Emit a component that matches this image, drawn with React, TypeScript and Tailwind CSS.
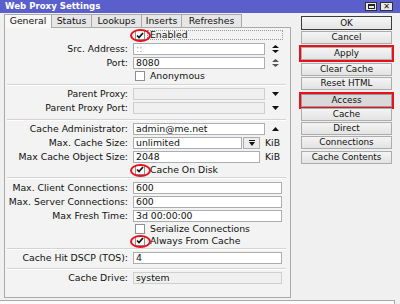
import React from "react";

function Check() {
  return (
    <svg width="8" height="7" viewBox="0 0 8 7" className="block">
      <polyline points="1,3.5 3,5.5 7,1" fill="none" stroke="#111" strokeWidth="1.7" />
    </svg>
  );
}

function CheckBox({ checked, circled }: { checked?: boolean; circled?: boolean }) {
  return (
    <div className="relative w-[10px] h-[10px] border border-[#8e8f8f] bg-white flex items-center justify-center">
      {checked && <Check />}
      {circled && (
        <div className="absolute left-[-6px] top-[-2px] w-[21px] h-[13px] rounded-[50%] border-[2.5px] border-[#e8101a]" />
      )}
    </div>
  );
}

function Label({ text }: { text: string }) {
  return <div className="w-[123px] text-right leading-none whitespace-nowrap">{text}</div>;
}

function SpinArrows({ gray }: { gray?: boolean }) {
  const c = gray ? "#555" : "#111";
  return (
    <svg width="7" height="8" viewBox="0 0 7 8" className="ml-[7px] block">
      <polygon points="0,3 7,3 3.5,0" fill={c} />
      <polygon points="0,5 7,5 3.5,8" fill={c} />
    </svg>
  );
}

function DownArrow() {
  return (
    <svg width="7" height="4" viewBox="0 0 7 4" className="ml-[7px] block">
      <polygon points="0,0 7,0 3.5,4" fill="#111" />
    </svg>
  );
}

function UpArrow() {
  return (
    <svg width="7" height="4" viewBox="0 0 7 4" className="ml-[7px] block">
      <polygon points="0,4 7,4 3.5,0" fill="#111" />
    </svg>
  );
}

function Sep({ cls }: { cls: string }) {
  return <div className={"ml-[2px] w-[279px] h-[2px] border-t border-[#d4d4d4] border-b border-b-white " + cls} />;
}

function Btn({ text, cls, red, def, pressed }: { text: string; cls: string; red?: boolean; def?: boolean; pressed?: boolean }) {
  return (
    <div className={"relative w-[91px] " + cls}>
      <div
        className={
          "w-full flex items-center justify-center leading-none " +
          (def
            ? "h-[14px] border border-[#3a3a3a] bg-[linear-gradient(#f6f6f6,#e4e4e4)]"
            : pressed
            ? "h-[13px] border border-[#9a9a9a] bg-[#d9d9d9]"
            : "h-[13px] border border-[#acacac] bg-[linear-gradient(#f4f4f4,#e3e3e3)]")
        }
      >
        {text}
      </div>
      {red && <div className="absolute left-[-2px] right-[-2px] top-[-2px] bottom-[-2px] border-2 border-[#e8101a]" />}
    </div>
  );
}

export default function App() {
  const input = "ml-[5px] h-[12px] border border-[#abadb3] bg-white flex items-center pl-[2px] leading-none";
  const disabled = "ml-[5px] h-[12px] border border-[#cfcfcf] bg-[#f0f0f0] flex items-center pl-[2px] leading-none";
  const row = "flex items-center h-[12px]";
  return (
    <div className="w-[400px] h-[304px] bg-[#f0f0f0] font-['DejaVu_Sans',sans-serif] text-[9.3px] text-[#111] overflow-hidden">
      {/* Title bar */}
      <div className="h-[13px] bg-[#5b5fcc] flex items-center">
        <div className="pl-[5px] text-white font-bold text-[8.6px] leading-none">Web Proxy Settings</div>
        <div className="ml-auto flex items-center mr-[7px]">
          <div className="w-[12px] h-[9px] border border-[#303030] bg-[#e8e8e8] flex items-center justify-center">
            <div className="w-[7px] h-[5px] border border-[#222] border-t-2" />
          </div>
          <div className="ml-[3px] w-[13px] h-[9px] border border-[#303030] bg-[#e8e8e8] flex items-center justify-center text-[8px] font-bold leading-none">
            ✕
          </div>
        </div>
      </div>

      <div className="flex">
        {/* Left column */}
        <div className="ml-[4px] w-[287px]">
          {/* Tabs */}
          <div className="flex h-[14px] items-end">
            <div className="w-[48px] h-[14px] border border-b-0 border-[#a9a9a9] bg-[#f8f8f8] flex items-center justify-center leading-none relative z-10 -mb-[1px] pb-[1px]">General</div>
            <div className="w-[40px] h-[13px] border border-l-0 border-b-0 border-[#a9a9a9] bg-[#e6e6e6] flex items-center justify-center leading-none">Status</div>
            <div className="w-[50px] h-[13px] border border-l-0 border-b-0 border-[#a9a9a9] bg-[#e6e6e6] flex items-center justify-center leading-none">Lookups</div>
            <div className="w-[40px] h-[13px] border border-l-0 border-b-0 border-[#a9a9a9] bg-[#e6e6e6] flex items-center justify-center leading-none">Inserts</div>
            <div className="w-[60px] h-[13px] border border-l-0 border-b-0 border-[#a9a9a9] bg-[#e6e6e6] flex items-center justify-center leading-none">Refreshes</div>
          </div>
          {/* Panel */}
          <div className="h-[271px] border border-[#a9a9a9] bg-[#f3f3f3] flex flex-col">
            {/* Enabled */}
            <div className="flex items-center h-[12px] mt-[1px] ml-[130px]">
              <CheckBox checked circled />
              <div className="ml-[2px] w-[136px] h-[10px] border border-dotted border-[#9a9a9a] flex items-center pl-[2px] leading-none">Enabled</div>
            </div>
            <div className={row + " mt-[2px]"}>
              <Label text="Src. Address:" />
              <div className={input + " w-[132px] text-[#999]"}>::</div>
              <SpinArrows />
            </div>
            <div className={row + " mt-[2px]"}>
              <Label text="Port:" />
              <div className={input + " w-[132px]"}>8080</div>
              <SpinArrows gray />
            </div>
            <div className="flex items-center h-[11px] mt-[1px] ml-[130px]">
              <CheckBox />
              <div className="ml-[5px] leading-none">Anonymous</div>
            </div>
            <Sep cls="mt-[3px]" />
            <div className={row + " mt-[2px]"}>
              <Label text="Parent Proxy:" />
              <div className={disabled + " w-[132px]"}></div>
              <DownArrow />
            </div>
            <div className={row + " mt-[2px]"}>
              <Label text="Parent Proxy Port:" />
              <div className={disabled + " w-[132px]"}></div>
              <DownArrow />
            </div>
            <Sep cls="mt-[5px]" />
            <div className={row + " mt-[2px]"}>
              <Label text="Cache Administrator:" />
              <div className={input + " w-[132px]"}>admin@me.net</div>
              <UpArrow />
            </div>
            <div className={row + " mt-[2px]"}>
              <Label text="Max. Cache Size:" />
              <div className={input + " w-[109px]"}>unlimited</div>
              <div className="ml-[1px] w-[17px] h-[12px] border border-[#acacac] bg-[#ececec] flex flex-col items-center justify-center">
                <div className="w-[6px] h-[1px] bg-[#111]" />
                <svg width="6" height="4" viewBox="0 0 6 4" className="block mt-[1px]">
                  <polygon points="0,0 6,0 3,4" fill="#111" />
                </svg>
              </div>
              <div className="ml-[5px] leading-none">KiB</div>
            </div>
            <div className={row + " mt-[2px]"}>
              <Label text="Max Cache Object Size:" />
              <div className={input + " w-[127px]"}>2048</div>
              <div className="ml-[5px] leading-none">KiB</div>
            </div>
            <div className="flex items-center h-[11px] mt-[1px] ml-[130px]">
              <CheckBox checked circled />
              <div className="ml-[5px] leading-none">Cache On Disk</div>
            </div>
            <Sep cls="mt-[2px]" />
            <div className={row + " mt-[3px]"}>
              <Label text="Max. Client Connections:" />
              <div className={input + " w-[149px]"}>600</div>
            </div>
            <div className={row + " mt-[2px]"}>
              <Label text="Max. Server Connections:" />
              <div className={input + " w-[149px]"}>600</div>
            </div>
            <div className={row + " mt-[2px]"}>
              <Label text="Max Fresh Time:" />
              <div className={input + " w-[149px]"}>3d 00:00:00</div>
            </div>
            <div className="flex items-center h-[11px] mt-[1px] ml-[130px]">
              <CheckBox />
              <div className="ml-[5px] leading-none">Serialize Connections</div>
            </div>
            <div className="flex items-center h-[11px] mt-[1px] ml-[130px]">
              <CheckBox checked circled />
              <div className="ml-[5px] leading-none">Always From Cache</div>
            </div>
            <Sep cls="mt-[2px]" />
            <div className={row + " mt-[2px]"}>
              <Label text="Cache Hit DSCP (TOS):" />
              <div className={input + " w-[149px]"}>4</div>
            </div>
            <Sep cls="mt-[4px]" />
            <div className={row + " mt-[2px]"}>
              <Label text="Cache Drive:" />
              <div className={disabled + " w-[149px]"}>system</div>
            </div>
          </div>
        </div>

        {/* Right column buttons */}
        <div className="ml-[10px] flex flex-col text-[8.8px]">
          <Btn text="OK" cls="mt-[3px]" def />
          <Btn text="Cancel" cls="mt-[1px]" />
          <Btn text="Apply" cls="mt-[3px]" red />
          <Btn text="Clear Cache" cls="mt-[3px]" />
          <Btn text="Reset HTML" cls="mt-[1px]" />
          <Btn text="Access" cls="mt-[4px]" red pressed />
          <Btn text="Cache" cls="mt-[1px]" />
          <Btn text="Direct" cls="mt-[1px]" />
          <Btn text="Connections" cls="mt-[1px]" />
          <Btn text="Cache Contents" cls="mt-[2px]" />
        </div>
      </div>

      <div className="mt-[2px] w-[395px] h-[4px] border-t border-r border-[#a9a9a9] bg-[#fbfbfb]" />
    </div>
  );
}
